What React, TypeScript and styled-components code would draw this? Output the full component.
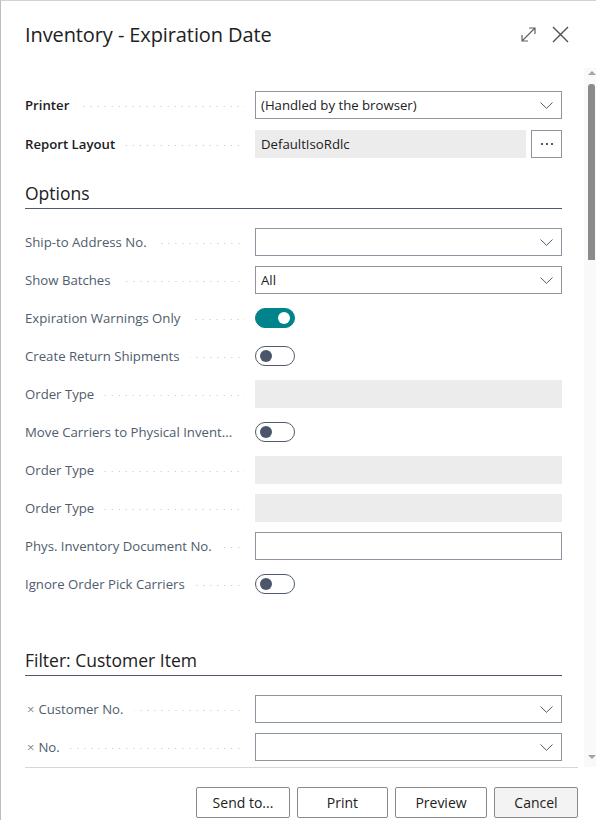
import React from "react";
import styled, { createGlobalStyle, css } from "styled-components";

const GlobalStyle = createGlobalStyle`
  html, body {
    margin: 0;
    padding: 0;
    background: #ffffff;
  }
  body {
    font-family: "Open Sans", "Noto Sans", "Liberation Sans", sans-serif;
    color: #212121;
  }
  * {
    box-sizing: border-box;
  }
`;

const Dialog = styled.div`
  width: 596px;
  height: 820px;
  display: flex;
  flex-direction: column;
  background: #ffffff;
  border-left: 1px solid #bdbdbd;
  border-top: 1px solid #d2d2d2;
  overflow: hidden;
`;

const Header = styled.div`
  height: 67px;
  flex-shrink: 0;
  display: flex;
  align-items: center;
  padding: 0 27px 0 24px;
  padding-bottom: 1px;
`;

const Title = styled.h1`
  margin: 0;
  flex: 1;
  font-size: 20px;
  font-weight: 500;
  color: #212121;
  letter-spacing: -0.1px;
`;

const HeaderIcons = styled.div`
  display: flex;
  align-items: center;
  gap: 15px;
`;

const IconButton = styled.span`
  width: 17px;
  height: 17px;
  display: flex;
  align-items: center;
  justify-content: center;
  cursor: pointer;
`;

const Body = styled.div`
  flex: 1;
  min-height: 0;
  display: flex;
  overflow: hidden;
`;

const Content = styled.div`
  flex: 1;
  padding: 23px 22px 0 24px;
  overflow: hidden;
`;

const ScrollTrack = styled.div`
  width: 12px;
  flex-shrink: 0;
  background: #f9f9f9;
  display: flex;
  flex-direction: column;
  align-items: center;
  padding: 3px 0 4px 3px;
`;

const ScrollArrow = styled.div<{ $down?: boolean }>`
  width: 0;
  height: 0;
  border-left: 4px solid transparent;
  border-right: 4px solid transparent;
  ${(p) =>
    p.$down
      ? css`
          border-top: 4px solid #a3a3a3;
          margin-top: auto;
        `
      : css`
          border-bottom: 4px solid #a3a3a3;
        `}
  margin-bottom: 4px;
`;

const ScrollThumb = styled.div`
  width: 7px;
  height: 176px;
  background: #8b8b8b;
  border-radius: 3px 3px 0 0;
  margin-top: 5px;
`;

const Rows = styled.div<{ $gap?: number }>`
  display: flex;
  flex-direction: column;
  gap: ${(p) => p.$gap ?? 10}px;
`;

const Row = styled.div`
  display: grid;
  grid-template-columns: 230px 1fr;
  align-items: center;
  height: 28px;
`;

const LabelCell = styled.div`
  display: flex;
  align-items: center;
  padding-right: 10px;
  min-width: 0;
`;

const LabelText = styled.span<{ $strong?: boolean }>`
  font-size: 13.2px;
  white-space: nowrap;
  color: ${(p) => (p.$strong ? "#212121" : "#505c6d")};
  font-weight: ${(p) => (p.$strong ? 600 : 400)};
  flex-shrink: 0;
`;

const Leader = styled.span`
  flex: 1;
  min-width: 6px;
  height: 1px;
  margin: 3px 0 0 10px;
  background-image: linear-gradient(to right, #c2c2c2 1px, transparent 1px);
  background-size: 7px 1px;
  background-repeat: repeat-x;
  background-position: right center;
`;

const ClearMark = styled.span`
  font-size: 13px;
  color: #8a8a8a;
  margin: 0 4px 0 2px;
`;

const FieldBox = styled.div<{ $kind: "select" | "text" | "readonly" }>`
  height: 28px;
  display: flex;
  align-items: center;
  padding: 0 8px 0 5px;
  font-size: 13.2px;
  color: #212121;
  ${(p) =>
    p.$kind === "readonly"
      ? css`
          background: #ececed;
          border: 1px solid #ececed;
        `
      : css`
          background: #ffffff;
          border: 1px solid #8d95a1;
        `}
`;

const FieldValue = styled.span`
  flex: 1;
  white-space: nowrap;
`;

const LayoutField = styled.div`
  display: flex;
  gap: 5px;
`;

const LayoutValue = styled(FieldBox)`
  flex: 1;
`;

const EllipsisButton = styled.button`
  width: 31px;
  height: 28px;
  border: 1px solid #8d95a1;
  background: #ffffff;
  padding: 0;
  display: flex;
  align-items: center;
  justify-content: center;
  gap: 3px;
  cursor: pointer;
`;

const Dot = styled.span`
  width: 2px;
  height: 2px;
  background: #212121;
  border-radius: 1px;
`;

const Toggle = styled.span<{ $on?: boolean }>`
  width: 40px;
  height: 20px;
  border-radius: 10px;
  display: flex;
  align-items: center;
  padding: 0 4px;
  ${(p) =>
    p.$on
      ? css`
          background: #00838b;
          border: 1px solid #00838b;
          justify-content: flex-end;
        `
      : css`
          background: #ffffff;
          border: 1px solid #505c6d;
          justify-content: flex-start;
        `}
`;

const Knob = styled.span<{ $on?: boolean }>`
  width: 12px;
  height: 12px;
  border-radius: 50%;
  background: ${(p) => (p.$on ? "#ffffff" : "#4b566a")};
`;

const Section = styled.section<{ $top: number }>`
  margin-top: ${(p) => p.$top}px;
`;

const SectionTitle = styled.h2`
  margin: 0 0 19px 0;
  font-size: 17.5px;
  font-weight: 500;
  color: #212121;
  line-height: 24px;
  padding-bottom: 3px;
  border-bottom: 1px solid #505c6d;
`;

const Footer = styled.div`
  flex-shrink: 0;
  margin: 0 18px 0 24px;
  border-top: 1px solid #d6d6d6;
  padding: 19px 0 2px 0;
  display: flex;
  justify-content: flex-end;
  gap: 7px;
`;

const ActionButton = styled.button<{ $w: number; $muted?: boolean }>`
  width: ${(p) => p.$w}px;
  height: 31px;
  border: 1px solid #8a8a8a;
  border-radius: 2px;
  background: ${(p) => (p.$muted ? "#f3f3f3" : "#ffffff")};
  font-family: "Open Sans", "Noto Sans", sans-serif;
  font-size: 14px;
  color: #212121;
  cursor: pointer;
`;

const Chevron = () => (
  <svg width="13" height="7" viewBox="0 0 13 7">
    <path d="M0.5 0.5 L6.5 6.3 L12.5 0.5" fill="none" stroke="#505c6d" strokeWidth="1" />
  </svg>
);

const ExpandIcon = () => (
  <svg width="17" height="17" viewBox="0 0 17 17">
    <path
      d="M2 15 L15 2 M9 2 H15 V8 M2 9 V15 H8"
      fill="none"
      stroke="#616161"
      strokeWidth="1.2"
    />
  </svg>
);

const CloseIcon = () => (
  <svg width="17" height="17" viewBox="0 0 17 17">
    <path d="M1 1 L16 16 M16 1 L1 16" fill="none" stroke="#505050" strokeWidth="1.4" />
  </svg>
);

type Field =
  | { type: "select"; value?: string }
  | { type: "text" }
  | { type: "readonly" }
  | { type: "toggle"; on?: boolean };

type FieldRow = { label: string; field: Field; clear?: boolean; strong?: boolean };

const optionRows: FieldRow[] = [
  { label: "Ship-to Address No.", field: { type: "select" } },
  { label: "Show Batches", field: { type: "select", value: "All" } },
  { label: "Expiration Warnings Only", field: { type: "toggle", on: true } },
  { label: "Create Return Shipments", field: { type: "toggle" } },
  { label: "Order Type", field: { type: "readonly" } },
  { label: "Move Carriers to Physical Invent...", field: { type: "toggle" } },
  { label: "Order Type", field: { type: "readonly" } },
  { label: "Order Type", field: { type: "readonly" } },
  { label: "Phys. Inventory Document No.", field: { type: "text" } },
  { label: "Ignore Order Pick Carriers", field: { type: "toggle" } },
];

const filterRows: FieldRow[] = [
  { label: "Customer No.", field: { type: "select" }, clear: true },
  { label: "No.", field: { type: "select" }, clear: true },
];

const renderField = (field: Field) => {
  if (field.type === "toggle") {
    return (
      <Toggle $on={field.on}>
        <Knob $on={field.on} />
      </Toggle>
    );
  }
  if (field.type === "select") {
    return (
      <FieldBox $kind="select">
        <FieldValue>{field.value}</FieldValue>
        <Chevron />
      </FieldBox>
    );
  }
  return <FieldBox $kind={field.type} />;
};

const FormRow: React.FC<{ row: FieldRow }> = ({ row }) => (
  <Row>
    <LabelCell>
      {row.clear && <ClearMark>×</ClearMark>}
      <LabelText $strong={row.strong}>{row.label}</LabelText>
      <Leader />
    </LabelCell>
    <div>{renderField(row.field)}</div>
  </Row>
);

const App: React.FC = () => {
  return (
    <>
      <GlobalStyle />
      <Dialog>
        <Header>
          <Title>Inventory - Expiration Date</Title>
          <HeaderIcons>
            <IconButton>
              <ExpandIcon />
            </IconButton>
            <IconButton>
              <CloseIcon />
            </IconButton>
          </HeaderIcons>
        </Header>
        <Body>
          <Content>
            <Rows $gap={11}>
              <FormRow row={{ label: "Printer", strong: true, field: { type: "select", value: "(Handled by the browser)" } }} />
              <Row>
                <LabelCell>
                  <LabelText $strong>Report Layout</LabelText>
                  <Leader />
                </LabelCell>
                <LayoutField>
                  <LayoutValue $kind="readonly">
                    <FieldValue>DefaultIsoRdlc</FieldValue>
                  </LayoutValue>
                  <EllipsisButton>
                    <Dot />
                    <Dot />
                    <Dot />
                  </EllipsisButton>
                </LayoutField>
              </Row>
            </Rows>
            <Section $top={23}>
              <SectionTitle>Options</SectionTitle>
              <Rows>
                {optionRows.map((row, i) => (
                  <FormRow key={i} row={row} />
                ))}
              </Rows>
            </Section>
            <Section $top={50}>
              <SectionTitle>Filter: Customer Item</SectionTitle>
              <Rows>
                {filterRows.map((row, i) => (
                  <FormRow key={i} row={row} />
                ))}
              </Rows>
            </Section>
          </Content>
          <ScrollTrack>
            <ScrollArrow />
            <ScrollThumb />
            <ScrollArrow $down />
          </ScrollTrack>
        </Body>
        <Footer>
          <ActionButton $w={94}>Send to...</ActionButton>
          <ActionButton $w={91}>Print</ActionButton>
          <ActionButton $w={92}>Preview</ActionButton>
          <ActionButton $w={84} $muted>
            Cancel
          </ActionButton>
        </Footer>
      </Dialog>
    </>
  );
};

export default App;
